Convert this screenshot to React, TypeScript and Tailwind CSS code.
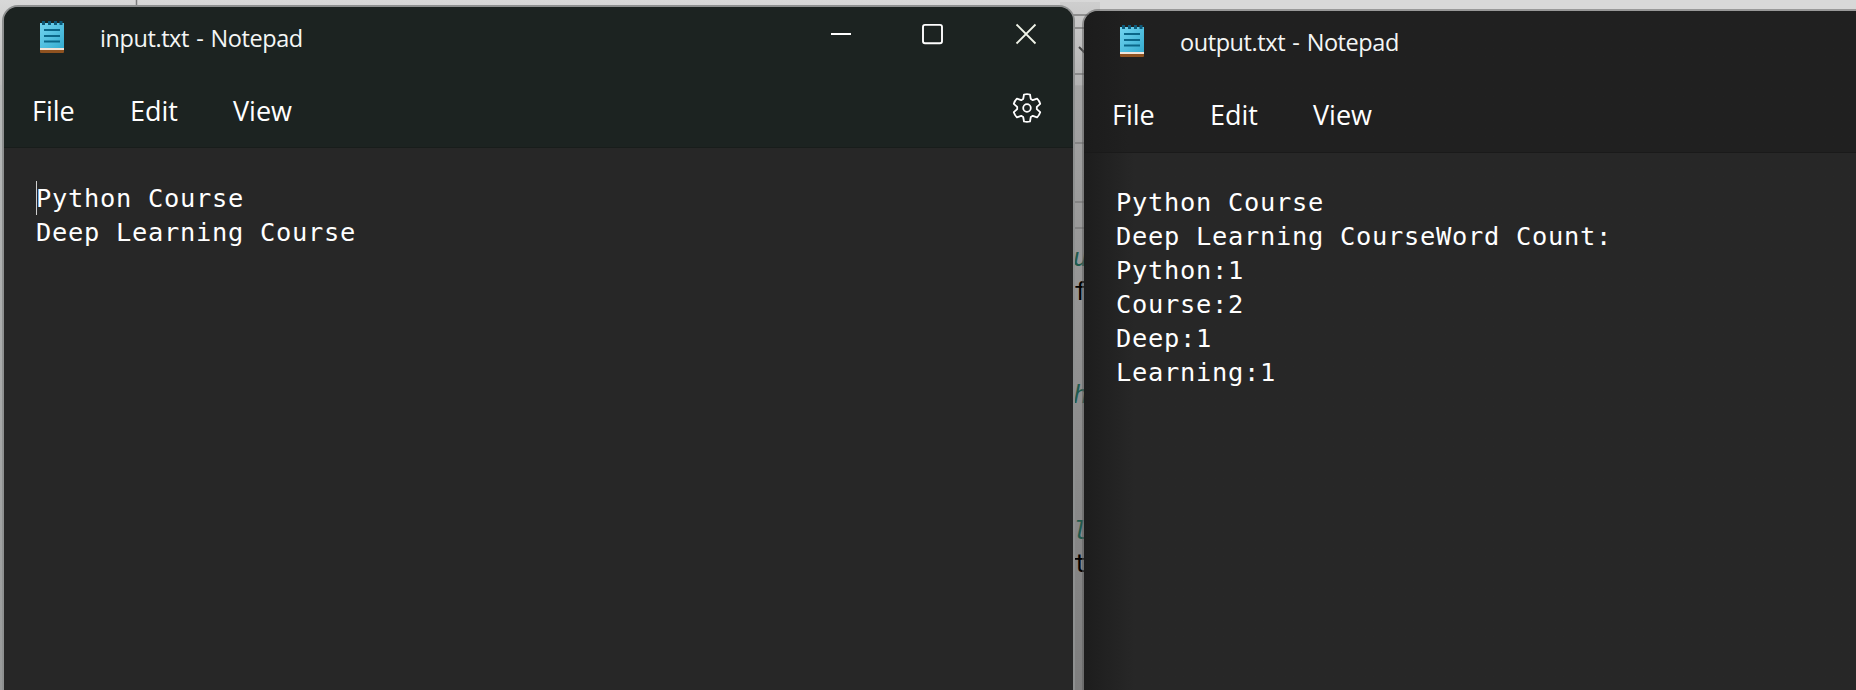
import React from "react";

function NotepadIcon() {
  return (
    <svg className="h-8 w-6 shrink-0" viewBox="0 0 24 32">
      <defs>
        <linearGradient id="page" x1="0" y1="0" x2="1" y2="1">
          <stop offset="0" stopColor="#72d4f0" />
          <stop offset="1" stopColor="#35acd0" />
        </linearGradient>
      </defs>
      <rect x="0" y="26" width="24" height="6" rx="1" fill="#8f5220" />
      <rect x="0" y="27" width="24" height="2" fill="#f0e4da" />
      <rect x="0" y="2" width="24" height="25" fill="url(#page)" />
      <path d="M3.500 0v4M9.500 0v4M15.500 0v4M21 0v4" stroke="#0d5a7a" strokeWidth="3" />
      <path d="M4 9h16M4 15h16M4 20.500h16" stroke="#0a6688" strokeWidth="2" />
    </svg>
  );
}

function GearIcon() {
  return (
    <svg className="size-[30px]" viewBox="0 0 30 30" fill="none" stroke="#fff" strokeWidth="1.8" strokeLinejoin="round">
      <path d="M12 1.5Q15 .7 18 1.5L18.8 6L20.8 7.2L25.1 5.7Q27.3 7.800 28.2 10.8L24.8 13.8V16.2L28.2 19.2Q27.3 22.2 25.1 24.3L20.8 22.8L18.8 24L18 28.5Q15 29.3 12 28.5L11.2 24L9.2 22.8L4.9 24.3Q2.7 22.2 1.8 19.2L5.2 16.2V13.8L1.8 10.8Q2.7 7.8 4.9 5.7L9.2 7.2L11.2 6Z" />
      <circle cx="15" cy="15" r="3.8" />
    </svg>
  );
}

function WindowControls() {
  return (
    <svg className="h-6 w-[210px]" viewBox="0 0 210 24" fill="none" stroke="#fff" strokeWidth="1.9">
      <path d="M1 12h20" />
      <rect x="93" y="2.9" width="19" height="18.4" rx="2" />
      <path d="M186.500 2.500l19 19M205.500 2.500l-19 19" stroke="#f1f5e9" strokeWidth="1.8" />
    </svg>
  );
}

function Menu() {
  return (
    <nav className="flex text-[27px] leading-9 text-white">
      <span className="w-[98px]">File</span>
      <span className="w-[103px]">Edit</span>
      <span>View</span>
    </nav>
  );
}

type WindowProps = { title: string; lines: string[]; active?: boolean };

function NotepadWindow({ title, lines, active = false }: WindowProps) {
  return (
    <section className="flex h-full flex-col overflow-hidden rounded-t-[14px] bg-[#272727]">
      <header className={active ? "h-[141px] shrink-0 border-b border-[#181d1b] bg-[#1c2321]" : "h-[142px] shrink-0 border-b border-[#1a1a1a] bg-linear-to-r from-[#1c1c1c] to-[#202020] to-[45px]"}>
        <div className="flex h-[62px] items-start justify-between">
          <div className="flex pt-[14px] pl-9">
            <NotepadIcon />
            <h1 className="mt-px ml-9 text-[23.5px] leading-8 tracking-[-0.42px] [word-spacing:1.5px] whitespace-pre text-[#f4f6f5]">{title}</h1>
          </div>
          {active && <div className="pt-[15px] pr-[33px]"><WindowControls /></div>}
        </div>
        <div className="flex items-start justify-between pt-[24px] pr-[31px] pl-7">
          <Menu />
          {active && <GearIcon />}
        </div>
      </header>
      <main className={active ? "relative pt-[33px] pl-8" : "relative h-full bg-linear-to-r from-[#1d1d1d] to-[#272727] to-[50px] pt-8 pl-8"}>
        {active && <i className="absolute top-[33px] left-8 h-[34px] w-px bg-[#d0d0d0]" />}
        {lines.map((line) => (
          <p key={line} className="font-['DejaVu_Sans_Mono',monospace] text-[25.4px] leading-[34.1px] tracking-[0.71px] whitespace-pre text-white">{line}</p>
        ))}
      </main>
    </section>
  );
}

function EditorBehind() {
  return (
    <div className="h-full bg-[#b4b4b4]">
      <svg className="h-full w-full" viewBox="0 0 1856 690">
        <defs>
          <linearGradient id="top" x1="0" y1="0" x2="0" y2="1">
            <stop offset="0" stopColor="#d8d8d8" />
            <stop offset="1" stopColor="#bcbcbc" />
          </linearGradient>
          <linearGradient id="left" x1="0" y1="0" x2="0" y2="1">
            <stop offset="0" stopColor="#b8baba" />
            <stop offset="1" stopColor="#989a9a" />
          </linearGradient>
          <linearGradient id="gap" x1="0" y1="0" x2="0" y2="1">
            <stop offset="0" stopColor="#cecece" />
            <stop offset=".12" stopColor="#b2b2b2" />
            <stop offset=".122" stopColor="#a4a4a4" />
            <stop offset=".4" stopColor="#969696" />
            <stop offset="1" stopColor="#7e7e7e" />
          </linearGradient>
        </defs>
        <rect width="1856" height="85" fill="url(#top)" />
        <rect x="1086" width="770" height="11" fill="#d8d8d8" />
        <rect y="85" width="8" height="605" fill="url(#left)" />
        <rect x="1060" y="2" width="40" height="688" fill="url(#gap)" />
        <path d="M136.500 0v8M1070 15h18M1070 28h18M1070 74h18M1070 143h18M1070 202h18M1070 228h18" stroke="#7c7c7c" strokeWidth="1.5" />
        <path d="M1079 47l6 6" stroke="#444" strokeWidth="2" />
        <g className="font-['DejaVu_Sans_Mono',monospace]" fontSize="25">
          <g fill="#1f5a4d" fontStyle="italic">
            <text x="1073" y="266">u</text>
            <text x="1073" y="403">h</text>
            <text x="1073" y="539">l</text>
          </g>
          <text x="1073" y="300">f</text>
          <text x="1073" y="572">t</text>
        </g>
      </svg>
    </div>
  );
}

export default function App() {
  return (
    <div className="relative h-[690px] w-[1856px] overflow-hidden font-['Open_Sans','Noto_Sans',sans-serif]">
      <EditorBehind />
      <div className="absolute top-[7px] left-1 h-[700px] w-[1069px] rounded-t-[14px] shadow-[0_0_0_2px_#8e9090]">
        <NotepadWindow active title="input.txt - Notepad" lines={["Python Course", "Deep Learning Course"]} />
      </div>
      <div className="absolute top-[11px] left-[1084px] h-[700px] w-[800px] rounded-t-[14px] shadow-[0_0_0_2px_rgba(90,90,90,0.5)]">
        <NotepadWindow
          title="output.txt - Notepad"
          lines={["Python Course", "Deep Learning CourseWord Count:", "Python:1", "Course:2", "Deep:1", "Learning:1"]}
        />
      </div>
    </div>
  );
}
